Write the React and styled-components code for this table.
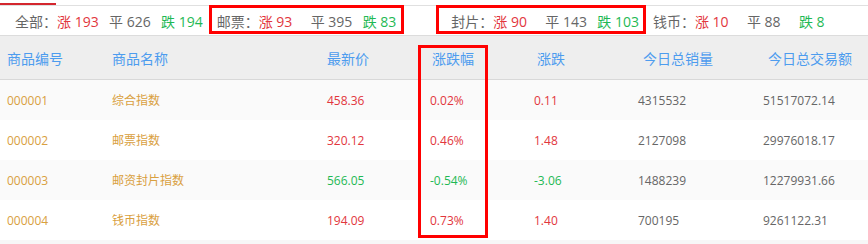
import styled, { createGlobalStyle } from 'styled-components';

const RED = '#e2363d';
const GREEN = '#1fb955';
const GRAY = '#666666';
const BLUE = '#4d9cee';
const ORANGE = '#d9a03e';

const stats = [
  { label: '全部：', up: 193, flat: 626, down: 194, gap: 14 },
  { label: '邮票：', up: 93, flat: 395, down: 83, gap: 55, mark: { l: -8, r: -8 } },
  { label: '封片：', up: 90, flat: 143, down: 103, gap: 14, mark: { l: -15, r: -7 } },
  { label: '钱币：', up: 10, flat: 88, down: 8, gap: 0 },
];

const columns = [
  { title: '商品编号', width: 105, shift: 0 },
  { title: '商品名称', width: 215, shift: 0 },
  { title: '最新价', width: 103, shift: 0 },
  { title: '涨跌幅', width: 104, shift: 2 },
  { title: '涨跌', width: 104, shift: 3 },
  { title: '今日总销量', width: 125, shift: 5 },
  { title: '今日总交易额', width: 0, shift: 5 },
];

const rows = [
  { code: '000001', name: '综合指数', price: '458.36', pct: '0.02%', diff: '0.11', vol: '4315532', amount: '51517072.14', up: true },
  { code: '000002', name: '邮票指数', price: '320.12', pct: '0.46%', diff: '1.48', vol: '2127098', amount: '29976018.17', up: true },
  { code: '000003', name: '邮资封片指数', price: '566.05', pct: '-0.54%', diff: '-3.06', vol: '1488239', amount: '12279931.66', up: false },
  { code: '000004', name: '钱币指数', price: '194.09', pct: '0.73%', diff: '1.40', vol: '700195', amount: '9261122.31', up: true },
];

const gridCols = columns.map((c) => (c.width ? `${c.width}px` : '1fr')).join(' ');

function App() {
  return (
    <>
      <GlobalStyle />
      <Page>
        <TabStrip>
          <ActiveTab />
        </TabStrip>
        <StatBar>
          {stats.map((g) => (
            <Group key={g.label} $gap={g.gap} $mark={g.mark}>
              <GroupLabel>{g.label}</GroupLabel>
              <Stat $color={RED}>涨 {g.up}</Stat>
              <Stat $color={GRAY}>平 {g.flat}</Stat>
              <Stat $color={GREEN}>跌 {g.down}</Stat>
            </Group>
          ))}
        </StatBar>
        <Table>
          <HeadRow>
            {columns.map((c) => (
              <HeadCell key={c.title} $shift={c.shift}>{c.title}</HeadCell>
            ))}
          </HeadRow>
          {rows.map((r, i) => {
            const tone = r.up ? RED : GREEN;
            return (
              <Row key={r.code} $odd={i % 2 === 0}>
                <Cell $color={ORANGE}>{r.code}</Cell>
                <Cell $color={ORANGE}>{r.name}</Cell>
                <Cell $color={tone}>{r.price}</Cell>
                <Cell $color={tone}>{r.pct}</Cell>
                <Cell $color={tone}>{r.diff}</Cell>
                <Cell $color={GRAY}>{r.vol}</Cell>
                <Cell $color={GRAY}>{r.amount}</Cell>
              </Row>
            );
          })}
          <ColumnMark />
        </Table>
        <Filler />
      </Page>
    </>
  );
}

const GlobalStyle = createGlobalStyle`
  body {
    margin: 0;
    background: #ffffff;
    font-family: "Open Sans", "Noto Sans CJK SC", sans-serif;
  }
`;

const Page = styled.div`
  width: 868px;
  display: flex;
  flex-direction: column;
`;

const TabStrip = styled.div`
  height: 5px;
  display: flex;
  align-items: flex-end;
`;

const ActiveTab = styled.div`
  width: 56px;
  height: 2px;
  background: #d4262e;
`;

const StatBar = styled.div`
  height: 29px;
  display: flex;
  align-items: stretch;
  padding-left: 15px;
  border-top: 1px solid #e0e0e0;
  border-bottom: 1px solid #dcdcdc;
  font-size: 14px;
`;

const Group = styled.div`
  position: relative;
  display: flex;
  align-items: center;
  margin-right: ${(p) => p.$gap}px;

  ${(p) =>
    p.$mark &&
    `
    &::after {
      content: '';
      position: absolute;
      top: -1px;
      bottom: 1px;
      left: ${p.$mark.l}px;
      right: ${p.$mark.r}px;
      border: 3px solid #ff0000;
    }
  `}
`;

const GroupLabel = styled.span`
  width: 42px;
  color: ${GRAY};
`;

const Stat = styled.span`
  width: 52px;
  color: ${(p) => p.$color};
  white-space: nowrap;

  &:last-child {
    width: auto;
  }
`;

const Table = styled.div`
  position: relative;
  display: flex;
  flex-direction: column;
`;

const HeadRow = styled.div`
  display: grid;
  grid-template-columns: ${gridCols};
  align-items: center;
  height: 43px;
  padding-left: 7px;
  background: #eeeeee;
  border-bottom: 1px solid #d8d8d8;
`;

const HeadCell = styled.div`
  padding-left: ${(p) => p.$shift}px;
  font-size: 14px;
  color: ${BLUE};
`;

const Row = styled.div`
  display: grid;
  grid-template-columns: ${gridCols};
  align-items: center;
  height: 40px;
  padding-left: 7px;
  background: ${(p) => (p.$odd ? '#fafafa' : '#ffffff')};
`;

const Cell = styled.div`
  font-size: 12px;
  color: ${(p) => p.$color};
`;

const ColumnMark = styled.div`
  position: absolute;
  left: 418px;
  top: 9px;
  width: 70px;
  height: 193px;
  box-sizing: border-box;
  border: 3px solid #ff0000;
  pointer-events: none;
`;

const Filler = styled.div`
  height: 10px;
  background: #f7f7f7;
`;

export default App;
